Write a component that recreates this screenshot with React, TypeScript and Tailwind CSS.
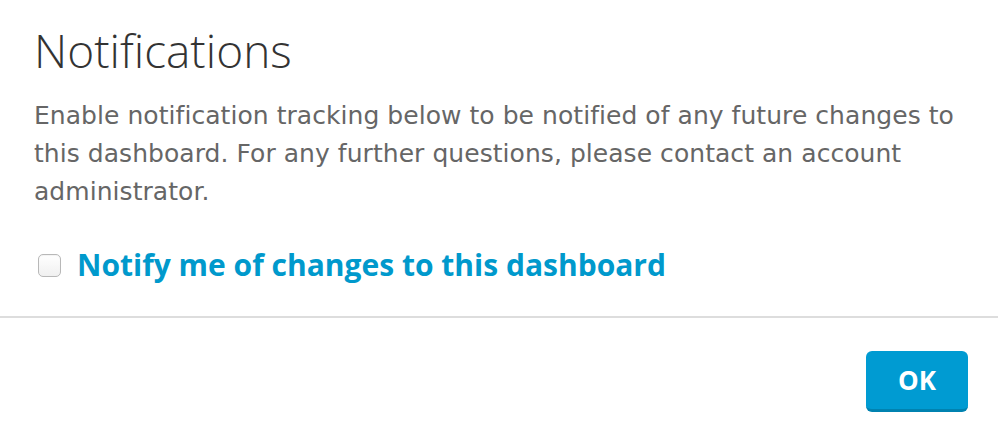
export default function App() {
    return (
        <div className="w-[998px] h-[436px] bg-white overflow-hidden">
            <div className="px-[34px] pt-[22px]">
                <h1 className="text-[46px] leading-[56px] font-light text-[#333333] font-['Open_Sans',sans-serif]">
                    Notifications
                </h1>
                <p className="mt-[19px] text-[25px] leading-[38px] text-[#666666] font-['DejaVu_Sans',sans-serif] tracking-[0.05px]">
                    Enable notification tracking below to be notified of any future changes to this dashboard. For any further questions, please contact an account administrator.
                </p>
                <label className="mt-[36px] flex items-center gap-[16px] pl-[4px]">
                    <span className="w-[23px] h-[23px] rounded-[5px] border border-[#b8b8b8] bg-gradient-to-b from-white to-[#f0f0f0] shadow-[inset_0_1px_1px_rgba(0,0,0,0.05)]" />
                    <span className="text-[30px] leading-[36px] font-bold text-[#0099cc] font-['Open_Sans',sans-serif]">
                        Notify me of changes to this dashboard
                    </span>
                </label>
            </div>
            <div className="mt-[33px] h-[2px] bg-[#dddddd]" />
            <div className="flex justify-end pr-[30px] pt-[33px]">
                <button className="w-[102px] h-[61px] rounded-[6px] bg-[#009bd2] border-b-[3px] border-[#0082b0] text-white text-[26px] font-bold font-['Open_Sans',sans-serif]">
                    OK
                </button>
            </div>
        </div>
    )
}
